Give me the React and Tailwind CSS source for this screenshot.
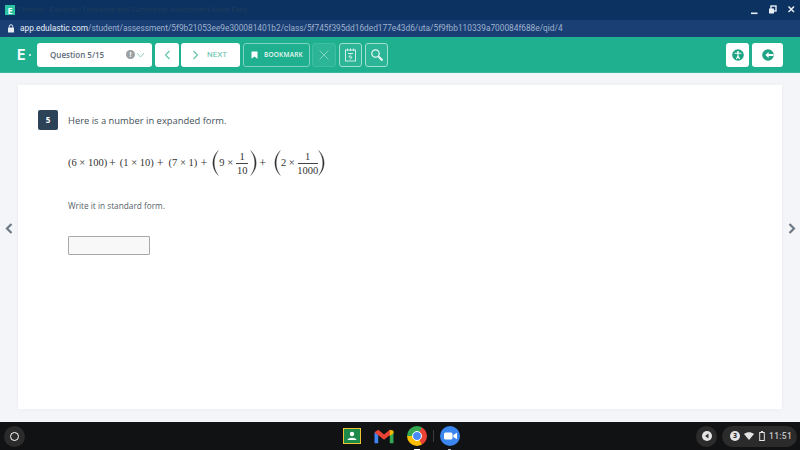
import React from "react";

const Paren = ({ flip }) => (
  <svg width="7" height="26" viewBox="0 0 7 26" className={flip ? "-scale-x-100" : ""}>
    <path d="M6.3 0.5 C2.5 4.5 0.8 8.5 0.8 13 C0.8 17.5 2.5 21.5 6.3 25.5 C3.5 21.5 2.2 17.5 2.2 13 C2.2 8.5 3.5 4.5 6.3 0.5 Z" fill="#333" stroke="#333" strokeWidth="0.3" />
  </svg>
);

const Frac = ({ d, w }) => (
  <span className="inline-flex flex-col items-center text-[10.5px] leading-[11px]" style={{ width: w }}>
    <span>1</span>
    <span className="w-full h-px bg-[#444] my-px" />
    <span>{d}</span>
  </span>
);

const HeaderBtn = ({ children, className = "" }) => (
  <div className={`h-[24px] flex items-center justify-center rounded-[3px] ${className}`}>{children}</div>
);

const Plus = ({ className = "" }) => <span className={`text-[12px] leading-none ${className}`}>+</span>;

export default function App() {
  return (
    <div className="w-[800px] h-[450px] overflow-hidden flex flex-col bg-[#f3f5f8] font-['Open_Sans',sans-serif]">
      {/* title bar */}
      <div className="h-[20px] bg-[#0b3260] flex items-center shrink-0">
        <div className="ml-[5px] w-[10px] h-[10px] bg-[#2bc4a2] flex items-center justify-center">
          <span className="text-white text-[9px] font-bold leading-none">E</span>
        </div>
        <span className="ml-[3px] text-[7.3px] text-[#1f3c5e] font-['Roboto',sans-serif] whitespace-nowrap">
          Chrome - Edulastic: Formative and Summative Assessment Made Easy
        </span>
        <div className="ml-auto flex items-center">
          <svg width="10" height="10" viewBox="0 0 10 10" className="mr-[8px]"><rect x="1" y="7.5" width="6.5" height="1.6" fill="#e8eef5" /></svg>
          <svg width="10" height="10" viewBox="0 0 10 10" className="mr-[9px]"><rect x="3" y="1" width="5" height="5" fill="none" stroke="#e8eef5" strokeWidth="1.4" /><rect x="1" y="3.5" width="5" height="5" fill="#e8eef5" /></svg>
          <svg width="10" height="10" viewBox="0 0 10 10" className="mr-[3px]"><path d="M1.5 1.5 L7 7 M7 1.5 L1.5 7" stroke="#e8eef5" strokeWidth="1.5" /></svg>
        </div>
      </div>
      {/* url bar */}
      <div className="h-[17px] bg-[#1a3f75] flex items-center shrink-0 font-['Roboto',sans-serif] text-[8.3px] leading-none">
        <svg width="8" height="9" viewBox="0 0 8 9" className="ml-[7px] mr-[5px]"><rect x="1" y="3.5" width="6" height="5" rx="0.6" fill="#e6ebf2" /><path d="M2.3 3.7 V2.4 a1.7 1.7 0 0 1 3.4 0 V3.7" fill="none" stroke="#e6ebf2" /></svg>
        <span className="text-[#e9eef5] whitespace-nowrap">app.edulastic.com</span>
        <span className="text-[#9fb2cc] whitespace-nowrap">/student/assessment/5f9b21053ee9e300081401b2/class/5f745f395dd16ded177e43d6/uta/5f9fbb110339a700084f688e/qid/4</span>
      </div>
      {/* app header */}
      <div className="h-[36px] bg-[#1fb08f] flex items-center shrink-0 border-b border-[#35bb9c]">
        <div className="ml-[17px] w-[20px] flex items-center">
          <span className="text-white font-bold text-[14px] leading-none font-['Inter',sans-serif]">E</span>
          <span className="ml-[3px] w-[2px] h-[2px] rounded-full bg-white" />
        </div>
        <HeaderBtn className="w-[115px] bg-white pl-[13px] pr-[3px] !justify-start">
          <span className="text-[8px] font-semibold text-[#5d6b7b] whitespace-nowrap">Question 5/15</span>
          <span className="ml-auto w-[9px] h-[9px] rounded-full bg-[#9a9fa3] text-white text-[7px] font-bold leading-[9px] text-center">!</span>
          <svg width="9" height="6" viewBox="0 0 9 6" className="ml-[1px] mr-[4px]"><path d="M1 1 L4.5 5 L8 1" fill="none" stroke="#8fd2c1" strokeWidth="1" /></svg>
        </HeaderBtn>
        <HeaderBtn className="ml-[3px] w-[24px] bg-white">
          <svg width="7" height="10" viewBox="0 0 7 10"><path d="M5.5 1 L1.5 5 L5.5 9" fill="none" stroke="#5cc2aa" strokeWidth="1.1" /></svg>
        </HeaderBtn>
        <HeaderBtn className="ml-[2px] w-[59px] bg-white !justify-start">
          <svg width="7" height="10" viewBox="0 0 7 10" className="ml-[11px]"><path d="M1.5 1 L5.5 5 L1.5 9" fill="none" stroke="#5cc2aa" strokeWidth="1.1" /></svg>
          <span className="ml-[8px] text-[8px] text-[#5fc2aa] font-['Roboto',sans-serif]">NEXT</span>
        </HeaderBtn>
        <HeaderBtn className="ml-[3px] w-[67px] border border-[#7dd3be] !justify-start">
          <svg width="7" height="8" viewBox="0 0 7 8" className="ml-[7px]"><path d="M0.5 0.5 H6.5 V7.8 L3.5 5.6 L0.5 7.8 Z" fill="#fff" /></svg>
          <span className="ml-[6px] text-[6.5px] font-semibold tracking-[0.2px] text-white opacity-90 whitespace-nowrap">BOOKMARK</span>
        </HeaderBtn>
        <HeaderBtn className="ml-[2px] w-[24px] bg-[#2cb596] border border-[#3fbfa2]">
          <svg width="12" height="12" viewBox="0 0 12 12"><path d="M1.5 1.5 L10.5 10.5 M10.5 1.5 L1.5 10.5" stroke="#7dd3be" strokeWidth="1" /></svg>
        </HeaderBtn>
        <HeaderBtn className="ml-[3px] w-[23px] bg-[#2cb596] border border-[#9fe0d0]">
          <svg width="13" height="14" viewBox="0 0 13 14" fill="none" stroke="#e0f5ef" strokeWidth="0.9">
            <rect x="1.5" y="2" width="10" height="11" />
            <path d="M3.5 0.5 V3 M6.5 0.5 V3 M9.5 0.5 V3 M4 5.5 H9 M6.8 6.5 L4.8 9 H8 L6.2 11.5" />
          </svg>
        </HeaderBtn>
        <HeaderBtn className="ml-[3px] w-[23px] bg-[#2cb596] border border-[#9fe0d0]">
          <svg width="14" height="14" viewBox="0 0 14 14" fill="none" stroke="#f0faf7">
            <circle cx="5.5" cy="5.5" r="3.7" strokeWidth="1.2" />
            <path d="M8.5 8.5 L12.5 12.5" strokeWidth="2" />
          </svg>
        </HeaderBtn>
        <HeaderBtn className="ml-auto w-[23px] bg-white">
          <svg width="12" height="12" viewBox="0 0 12 12">
            <circle cx="6" cy="6" r="5.8" fill="#1fa385" />
            <circle cx="6" cy="2.9" r="1" fill="#fff" />
            <path d="M2.6 4.2 H9.4 M6 4.2 V7 M6 7 L4.4 10 M6 7 L7.6 10" stroke="#fff" strokeWidth="1.1" fill="none" />
          </svg>
        </HeaderBtn>
        <HeaderBtn className="ml-[3px] mr-[17px] w-[31px] bg-white">
          <svg width="12" height="12" viewBox="0 0 12 12">
            <circle cx="6" cy="6" r="5.8" fill="#1fa385" />
            <path d="M6.6 3 L3.4 6 L6.6 9 V7 H11.5 V5 H6.6 Z" fill="#fff" />
          </svg>
        </HeaderBtn>
      </div>
      {/* main */}
      <div className="flex-1 flex items-stretch pt-[12px] pb-[13px] min-h-0">
        <div className="w-[18px] flex items-center justify-center pb-[38px]">
          <svg width="8" height="11" viewBox="0 0 8 11"><path d="M6.5 1 L2 5.5 L6.5 10" fill="none" stroke="#6d7a86" strokeWidth="2.2" /></svg>
        </div>
        <div className="flex-1 bg-white pl-[20px] pt-[25px] flex items-start shadow-[0_0_4px_rgba(0,0,0,0.04)]">
          <div className="w-[20px] h-[20px] rounded-[2px] bg-[#2b4257] text-white text-[8px] font-bold flex items-center justify-center shrink-0">5</div>
          <div className="ml-[10px] flex flex-col">
            <p className="text-[9.4px] leading-[21px] text-[#444f5a] whitespace-nowrap">Here is a number in expanded form.</p>
            <div className="mt-[19px] h-[26px] flex items-center font-['Liberation_Serif',serif] text-[10.5px] text-[#333] whitespace-nowrap">
              <span className="w-[39px] whitespace-nowrap">(6 × 100)</span>
              <Plus className="ml-[2px]" />
              <span className="ml-[4px] w-[35px]">(1 × 10)</span>
              <Plus className="ml-[2px]" />
              <span className="ml-[5px] w-[30px]">(7 × 1)</span>
              <Plus className="ml-[2px]" />
              <span className="ml-[5px]"><Paren /></span>
              <span>9 ×</span>
              <span className="ml-[3px] inline-flex"><Frac d="10" w={12} /></span>
              <span className="ml-[2px]"><Paren flip /></span>
              <Plus className="ml-[2px]" />
              <span className="ml-[8px]"><Paren /></span>
              <span>2 ×</span>
              <span className="ml-[3px] inline-flex"><Frac d="1000" w={20} /></span>
              <span><Paren flip /></span>
            </div>
            <p className="mt-[24px] text-[8.25px] leading-[12px] text-[#555f69] whitespace-nowrap">Write it in standard form.</p>
            <div className="mt-[24px] w-[82px] h-[19px] border border-[#a8a8a8] rounded-[1px] bg-[#f8f8f8]" />
          </div>
        </div>
        <div className="w-[18px] flex items-center justify-center pb-[38px]">
          <svg width="8" height="11" viewBox="0 0 8 11" className="ml-[2px]"><path d="M1.5 1 L6 5.5 L1.5 10" fill="none" stroke="#6d7a86" strokeWidth="2.2" /></svg>
        </div>
      </div>
      {/* shelf */}
      <div className="h-[28px] bg-[#111213] flex items-center shrink-0 relative">
        <div className="ml-[4px] w-[21px] h-[21px] rounded-full bg-[#2b2b2c] flex items-center justify-center">
          <span className="w-[9px] h-[9px] rounded-full border-[1.5px] border-white" />
        </div>
        <div className="ml-[318px] flex items-center">
          <svg width="18" height="16" viewBox="0 0 18 16">
            <rect x="0.5" y="0.5" width="17" height="15" fill="#1b8a4a" stroke="#f2c230" />
            <circle cx="9" cy="6" r="2.2" fill="#fff" />
            <path d="M4.5 12 C5 9 13 9 13.5 12 Z" fill="#fff" />
          </svg>
          <svg width="20" height="15" viewBox="0 0 19 14" className="ml-[13px]">
            <path d="M0.5 3 V13.5 H4 V5 Z" fill="#4285f4" />
            <path d="M18.5 3 V13.5 H15 V5 Z" fill="#34a853" />
            <path d="M0.5 3 L4 0.5 L9.5 5 L15 0.5 L18.5 3 L9.5 10 Z" fill="#ea4335" />
            <path d="M15 0.5 L18.5 1.5 V4 L15 6.5 Z" fill="#fbbc04" />
          </svg>
          <div className="ml-[13px] relative w-[20px] h-[20px] rounded-full overflow-hidden bg-[#ea4335]">
            <div className="w-full h-full bg-[conic-gradient(from_30deg,#ea4335_0_120deg,#fbbc04_120deg_240deg,#34a853_240deg_360deg)]" />
            <span className="absolute left-[5px] top-[5px] w-[10px] h-[10px] rounded-full bg-[#4b8bf5] border-[1.5px] border-white" />
          </div>
          <span className="ml-[6px] w-px h-[12px] bg-[#3b3c3e]" />
          <div className="ml-[6px] w-[20px] h-[20px] rounded-full bg-[#3a85ee] flex items-center justify-center">
            <svg width="13" height="8" viewBox="0 0 13 8"><rect x="0" y="0.5" width="8.5" height="7" rx="1.5" fill="#fff" /><path d="M9.3 3 L13 0.8 V7.2 L9.3 5 Z" fill="#fff" /></svg>
          </div>
        </div>
        <span className="absolute left-[414px] bottom-0 w-[6px] h-px bg-white" />
        <span className="absolute left-[448px] bottom-0 w-[3px] h-px bg-[#bbb]" />
        <div className="ml-auto flex items-center mr-[3px]">
          <div className="w-[21px] h-[21px] rounded-full bg-[#2b2b2c] flex items-center justify-center">
            <span className="w-[10px] h-[10px] rounded-full bg-[#e4e4e4] flex items-center justify-center">
              <svg width="6" height="6" viewBox="0 0 6 6"><path d="M4.5 0.5 L1 3 L4.5 5.5 Z" fill="#333" /></svg>
            </span>
          </div>
          <div className="ml-[5px] h-[21px] w-[75px] rounded-full bg-[#2b2b2c] flex items-center pl-[8px]">
            <span className="w-[10px] h-[10px] rounded-full bg-[#e4e4e4] text-[#222] text-[7px] font-bold leading-[10px] text-center">3</span>
            <svg width="10" height="8" viewBox="0 0 10 8" className="ml-[4px]"><path d="M0 2 C3 -0.5 7 -0.5 10 2 L5 8 Z" fill="#e4e4e4" /></svg>
            <svg width="6" height="10" viewBox="0 0 6 10" className="ml-[5px]"><rect x="2" y="0" width="2" height="1.5" fill="#e4e4e4" /><rect x="0.7" y="1.5" width="4.6" height="8" fill="none" stroke="#e4e4e4" /></svg>
            <span className="ml-[4px] text-[8.5px] text-[#c4c4c4] font-['Roboto',sans-serif] font-medium tracking-[0.3px]">11:51</span>
          </div>
        </div>
      </div>
    </div>
  );
}
